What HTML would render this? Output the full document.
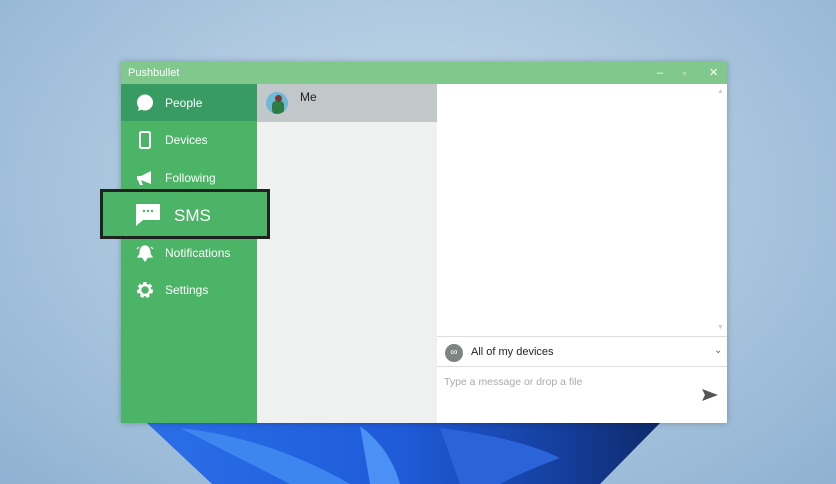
<!DOCTYPE html>
<html><head><style>
body{margin:0;width:836px;height:484px;overflow:hidden;font-family:"Liberation Sans",sans-serif;
background:radial-gradient(ellipse at 50% 40%,#c9dcec 0%,#a9c5de 55%,#8fb2d2 100%);position:relative}
.a{position:absolute}
.win{left:121px;top:62px;width:606px;height:361px;background:#fff;box-shadow:0 0 6px rgba(0,0,0,.25)}
.title{left:0;top:0;width:606px;height:22px;background:#80c88c;color:#fff;font-size:11px;line-height:22px}
.side{left:0;top:22px;width:136px;height:339px;background:#4cb466}
.item{position:absolute;left:0;width:136px;height:37px;color:#fff;font-size:12px;line-height:39px}
.item span{position:absolute;left:44px}
.mid{left:136px;top:22px;width:180px;height:339px;background:#eff1f0}
</style></head><body>
<svg class="a" style="left:140px;top:418px" width="540" height="66" viewBox="0 0 540 66">
<defs><linearGradient id="g" x1="0" x2="1" y1="0" y2="0"><stop offset="0" stop-color="#2a6fe8"/><stop offset="0.5" stop-color="#1f5ad8"/><stop offset="0.8" stop-color="#153f9e"/><stop offset="1" stop-color="#0e2a6a"/></linearGradient></defs>
<path d="M7 5 L520 5 L460 66 L72 66Z" fill="url(#g)"/>
<path d="M40 10 Q130 20 210 66 L150 66Z" fill="#3d86f0"/>
<path d="M220 8 Q250 30 260 66 L230 66Z" fill="#4a90f5"/>
<path d="M300 10 Q380 20 420 40 Q380 55 360 66 L320 66Z" fill="#2a64d8"/>
</svg>
<div class="a win">
 <div class="a title"><span style="margin-left:7px">Pushbullet</span>
  <span class="a" style="left:536px;top:0;color:#fff">–</span>
  <span class="a" style="left:562px;top:0;color:#fff;font-size:9px">▫</span>
  <span class="a" style="left:588px;top:0;color:#fff">✕</span></div>
 <div class="a side">
  <div class="item" style="top:0;background:#389c62"><svg class="a" style="left:15px;top:10px" width="18" height="18"><circle cx="9" cy="8.5" r="8" fill="#fff"/><path d="M3 13 L2 17 L7 15Z" fill="#fff"/></svg><span>People</span></div>
  <div class="item" style="top:37px"><svg class="a" style="left:18px;top:10px" width="12" height="18"><rect x="1" y="1" width="10" height="16" rx="1.5" fill="none" stroke="#fff" stroke-width="2"/></svg><span>Devices</span></div>
  <div class="item" style="top:75px"><svg class="a" style="left:15px;top:10px" width="18" height="18"><path d="M1 7 L5 7 L15 2 L15 15 L5 11 L7 16 L4 16 L2 11 L1 11Z" fill="#fff"/></svg><span>Following</span></div>
  <div class="item" style="top:150px"><svg class="a" style="left:15px;top:10px" width="18" height="18"><path d="M9 2 C5 2 4 6 4 10 L2 13 L16 13 L14 10 C14 6 13 2 9 2Z M7 14 L11 14 L9 17Z M1 5 L3 3 M17 5 L15 3" fill="#fff" stroke="#fff" stroke-width="1.2"/></svg><span>Notifications</span></div>
  <div class="item" style="top:187px"><svg class="a" style="left:15px;top:10px" width="18" height="18"><circle cx="9" cy="9" r="6" fill="none" stroke="#fff" stroke-width="4" stroke-dasharray="3 2.3"/><circle cx="9" cy="9" r="5" fill="none" stroke="#fff" stroke-width="2.5"/></svg><span>Settings</span></div>
 </div>
 <div class="a mid">
  <div class="a" style="left:0;top:0;width:180px;height:38px;background:#c2c7c9"></div>
  <div class="a" style="left:9px;top:8px;width:22px;height:22px;border-radius:50%;background:#6fb9d8;overflow:hidden"><div class="a" style="left:6px;top:9px;width:12px;height:13px;background:#2f7d46;border-radius:4px"></div><div class="a" style="left:9px;top:3px;width:7px;height:7px;border-radius:50%;background:#7a3b2e"></div></div>
  <div class="a" style="left:43px;top:6px;font-size:12px;color:#222">Me</div>
 </div>
 <div class="a" style="left:596px;top:26px;font-size:7px;color:#ccc">▲</div>
 <div class="a" style="left:596px;top:262px;font-size:7px;color:#ccc">▼</div>
 <div class="a" style="left:316px;top:274px;width:290px;height:1px;background:#ddd"></div>
 <div class="a" style="left:324px;top:282px;width:18px;height:18px;border-radius:50%;background:#7c8582;color:#fff;font-size:10px;line-height:18px;text-align:center">∞</div>
 <div class="a" style="left:350px;top:284px;font-size:11px;color:#222">All of my devices</div>
 <div class="a" style="left:593px;top:283px;font-size:10px;color:#666">⌄</div>
 <div class="a" style="left:316px;top:304px;width:290px;height:1px;background:#ddd"></div>
 <div class="a" style="left:323px;top:314px;font-size:10.5px;color:#aaa">Type a message or drop a file</div>
 <svg class="a" style="left:580px;top:326px" width="18" height="14"><path d="M1 1 L17 7 L1 13 L4 7Z" fill="#555"/></svg>
</div>
<div class="a" style="left:100px;top:189px;width:164px;height:44px;border:3px solid #1f2320;background:#4cb466;color:#fff">
 <svg class="a" style="left:32px;top:11px" width="26" height="24"><path d="M1 1 H25 V17 H8 L1 23Z" fill="#fff"/><circle cx="9" cy="8" r="1.2" fill="#4cb466"/><circle cx="13" cy="8" r="1.2" fill="#4cb466"/><circle cx="17" cy="8" r="1.2" fill="#4cb466"/></svg>
 <div class="a" style="left:71px;top:14px;font-size:17px">SMS</div>
</div>
</body></html>
